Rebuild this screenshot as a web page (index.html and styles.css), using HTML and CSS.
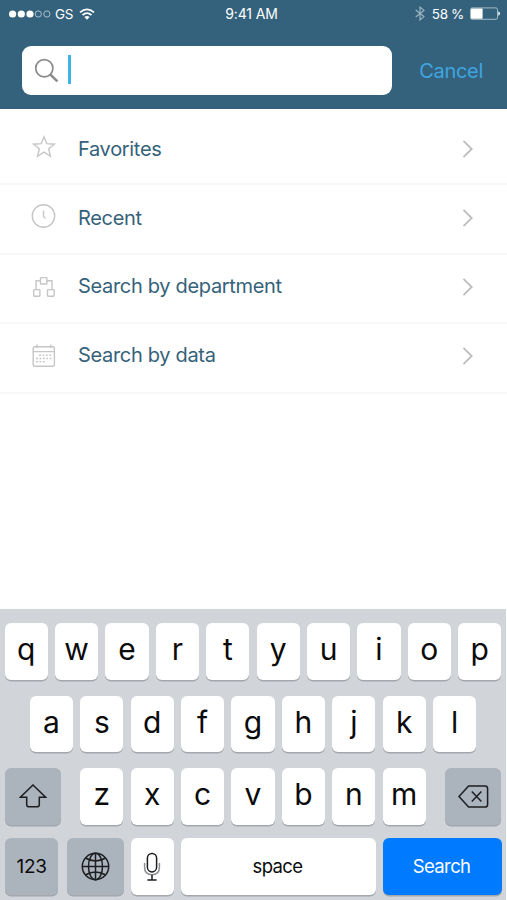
FILE: index.html
```html
<!DOCTYPE html>
<html lang="en">

<head>
  <meta charset="UTF-8">
  <meta name="viewport" content="width=device-width, initial-scale=1.0">
  <title>Search</title>

  <link rel="stylesheet" href="styles.css">
</head>

<body>
  <main class="screen">
    <header class="header">
      <div class="status">
        <div class="status-left">
          <svg class="signal" width="43" height="10" viewBox="0 0 43 10">
            <g fill="#fff">
              <circle cx="4.6" cy="5" r="3.6" />
              <circle cx="13.3" cy="5" r="3.6" />
              <circle cx="22" cy="5" r="3.6" />
            </g>
            <g fill="none" stroke="#a9bfcb" stroke-width="1">
              <circle cx="30.3" cy="5" r="3.1" />
              <circle cx="38.9" cy="5" r="3.1" />
            </g>
          </svg>
          <span class="carrier">GS</span>
          <svg class="wifi" width="16" height="12" viewBox="0 0 16 12">
            <g fill="none" stroke="#fff" stroke-width="1.7">
              <path d="M1 4.4Q8 -1.6 15 4.4" />
              <path d="M3.5 7Q8 3.2 12.5 7" />
            </g>
            <path d="M5.4 8.9Q8 6.9 10.6 8.9L8 11.7Z" fill="#fff" />
          </svg>
        </div>
        <span class="time">9:41 AM</span>
        <div class="status-right">
          <svg class="bluetooth" width="10" height="15" viewBox="0 0 10 15">
            <path d="M0.7 4L9 10.6L5 14V1L9 4.4L0.7 11" fill="none" stroke="#9fb6c3" stroke-width="1.1" />
          </svg>
          <span class="percent">58 %</span>
          <svg class="battery" width="31" height="13" viewBox="0 0 31 13">
            <rect x="0.5" y="0.9" width="27" height="11.4" rx="1.6" fill="none" stroke="#a5bcc9" />
            <rect x="1" y="1.4" width="11.6" height="10.4" rx="0.8" fill="#fff" />
            <path d="M28.3 4.4Q30 5 30 6.6T28.3 8.8Z" fill="#fff" />
          </svg>
        </div>
      </div>
      <div class="search-bar">
        <div class="search-field">
          <svg width="26" height="26" viewBox="0 0 26 26">
            <circle cx="10.3" cy="10.2" r="8.6" fill="none" stroke="#8b8b8b" stroke-width="1.7" />
            <path d="M16.4 16.6L23.4 23.4" stroke="#8b8b8b" stroke-width="2.6" />
          </svg>
          <span class="caret"></span>
        </div>
        <a class="cancel">Cancel</a>
      </div>
    </header>

    <ul class="menu">
      <li class="favorites">
        <svg class="icon" width="26" height="26" viewBox="0 0 26 26">
          <path d="M13 2.8L15.8 9.7L23.3 10.2L17.6 14.9L19.5 22.3L13 18.2L6.5 22.3L8.4 14.9L2.7 10.2L10.2 9.7Z" />
        </svg>
        <span>Favorites</span>
        <svg class="chevron" width="12" height="18" viewBox="0 0 12 18">
          <path d="M1.5 0.9L9.7 9L1.5 17.1" />
        </svg>
      </li>
      <li class="recent">
        <svg class="icon" width="26" height="26" viewBox="0 0 26 26">
          <circle cx="12.5" cy="13" r="11.2" />
          <path d="M12.5 7.4V13.3L14.4 15.6" />
        </svg>
        <span>Recent</span>
        <svg class="chevron" width="12" height="18" viewBox="0 0 12 18">
          <path d="M1.5 0.9L9.7 9L1.5 17.1" />
        </svg>
      </li>
      <li class="department">
        <svg class="icon" width="26" height="26" viewBox="0 0 26 26">
          <rect x="9.5" y="3.6" width="6.4" height="6.4" rx="0.6" />
          <rect x="2.7" y="15.6" width="6.2" height="6.6" rx="0.6" />
          <rect x="16.5" y="15.6" width="6.6" height="6.6" rx="0.6" />
          <path d="M9.5 6.8H5.1V15.6M15.9 6.8H21V15.6" />
        </svg>
        <span>Search by department</span>
        <svg class="chevron" width="12" height="18" viewBox="0 0 12 18">
          <path d="M1.5 0.9L9.7 9L1.5 17.1" />
        </svg>
      </li>
      <li class="data">
        <svg class="icon" width="26" height="26" viewBox="0 0 26 26">
          <rect x="2.2" y="3.8" width="21.2" height="19.4" rx="1.5" />
          <path d="M2.2 8.6H23.4M6 1.6V5M19.9 1.6V5" />
          <path class="days" d="M8.1 12.2H21M5.1 15.5H21M5.1 18.8H15" />
        </svg>
        <span>Search by data</span>
        <svg class="chevron" width="12" height="18" viewBox="0 0 12 18">
          <path d="M1.5 0.9L9.7 9L1.5 17.1" />
        </svg>
      </li>
    </ul>

    <section class="keyboard">
      <div class="keys">
        <button>q</button>
        <button>w</button>
        <button>e</button>
        <button>r</button>
        <button>t</button>
        <button>y</button>
        <button>u</button>
        <button>i</button>
        <button>o</button>
        <button>p</button>
      </div>
      <div class="keys">
        <button>a</button>
        <button>s</button>
        <button>d</button>
        <button>f</button>
        <button>g</button>
        <button>h</button>
        <button>j</button>
        <button>k</button>
        <button>l</button>
      </div>
      <div class="keys">
        <button class="dark shift" aria-label="Shift">
          <svg width="28" height="24" viewBox="0 0 28 24">
            <path d="M14 1L26.6 13.2H20.3V20.4Q20.3 22.8 17.9 22.8H10.1Q7.7 22.8 7.7 20.4V13.2H1.4Z" />
          </svg>
        </button>
        <button>z</button>
        <button>x</button>
        <button>c</button>
        <button>v</button>
        <button>b</button>
        <button>n</button>
        <button>m</button>
        <button class="dark delete" aria-label="Delete">
          <svg width="31" height="23" viewBox="0 0 31 23">
            <path d="M10.6 1H27Q29.6 1 29.6 3.6V19.4Q29.6 22 27 22H10.6L1 11.5Z" />
            <path d="M13.8 6.6L23.4 16.4M23.4 6.6L13.8 16.4" />
          </svg>
        </button>
      </div>
      <div class="keys">
        <button class="dark numbers">123</button>
        <button class="dark globe" aria-label="Next keyboard">
          <svg width="29" height="29" viewBox="0 0 29 29">
            <circle cx="14.5" cy="14.5" r="13.2" />
            <ellipse cx="14.5" cy="14.5" rx="7" ry="13.2" />
            <path d="M14.5 1.3V27.7M1.3 14.5H27.7M4.4 6Q14.5 12 24.6 6M4.4 23Q14.5 17 24.6 23" />
          </svg>
        </button>
        <button class="mic" aria-label="Dictation">
          <svg width="18" height="30" viewBox="0 0 18 30">
            <rect x="4.4" y="1.5" width="9.2" height="18.4" rx="4.6" />
            <path class="cradle" d="M1.6 11V15.6Q1.6 22.8 9 22.8T16.4 15.6V11" />
            <path d="M9 22.8V27.8M4.4 28H13.6" />
          </svg>
        </button>
        <button class="space">space</button>
        <button class="search">Search</button>
      </div>
    </section>
  </main>
</body>

</html>
```
FILE: styles.css
```css
* {
  box-sizing: border-box;
}

body {
  background: #fff;
  font-family: Inter, "Liberation Sans", sans-serif;
  margin: 0;
}

.screen {
  display: flex;
  flex-direction: column;
  height: 900px;
  overflow: hidden;
  width: 507px;
}

.header {
  background: #34627c;
  color: #fff;
  height: 108.5px;
}

.status {
  display: grid;
  font-size: 13.5px;
  grid-template-columns: 1fr auto 1fr;
  height: 27px;
  letter-spacing: -0.35px;
  padding: 0 6px 0 8px;
}

.status > *,
.status-left,
.status-right {
  align-items: center;
  display: flex;
}

.status-right {
  justify-content: flex-end;
}

.time {
  font-size: 14px;
  letter-spacing: -0.1px;
  margin-right: 6px;
}

.carrier {
  margin: 0 6px 0 4px;
}

.percent {
  margin: 0 6px 0 7px;
}

.search-bar {
  align-items: center;
  display: flex;
  padding: 19px 24px 0 21.5px;
}

.search-field {
  align-items: center;
  background: #fff;
  border-radius: 9px;
  display: flex;
  height: 49px;
  padding-left: 12.5px;
  width: 370.5px;
}

.caret {
  background: #3fb2e6;
  height: 29px;
  margin: 0 0 2px 8px;
  width: 3px;
}

.cancel {
  color: #3fa5e0;
  font-size: 20px;
  letter-spacing: -0.3px;
  margin-left: auto;
}

.menu {
  color: #35627a;
  font-size: 20px;
  letter-spacing: -0.32px;
  list-style: none;
  margin: 0;
  padding: 0;
}

.menu li {
  align-items: center;
  border-bottom: 2px solid #f7f7f7;
  display: flex;
  height: 69.5px;
  padding: 0 33px 2px 31px;
}

.menu .favorites {
  height: 76.5px;
  padding-top: 9px;
}

.favorites .icon {
  margin-bottom: 4px;
}

.menu .recent {
  padding-bottom: 2px;
}

.recent .icon {
  margin-bottom: 3px;
}

.department span {
  margin-bottom: 2px;
}

.menu .data {
  padding-bottom: 4px;
}

.data span {
  margin-bottom: 2px;
}

.menu span {
  flex: 1;
  margin-left: 21px;
}

.icon,
.chevron {
  fill: none;
  stroke: #c6c6c6;
  stroke-width: 1.4;
}

.chevron {
  stroke: #bdbdbd;
  stroke-width: 1.8;
}

.days {
  stroke-dasharray: 1.8 1.6;
}

.keyboard {
  background: #d1d5da;
  display: flex;
  flex-direction: column;
  gap: 16px;
  height: 291px;
  margin-top: auto;
  padding-top: 14px;
  width: 506px;
}

.keys {
  display: flex;
  gap: 7.1px;
  height: 56.5px;
  justify-content: center;
}

.keys:last-child {
  margin-top: -2.5px;
  padding-left: 1px;
}

button {
  align-items: center;
  background: #fff;
  border: 0;
  border-radius: 6px;
  box-shadow: 0 1.5px 0 #a4a8ad;
  color: #0b0b0b;
  display: flex;
  font: 30px Inter, "Liberation Sans", sans-serif;
  justify-content: center;
  padding: 0 0 4px;
  width: 43.3px;
}

button svg {
  fill: none;
  stroke: #1c1e21;
  stroke-width: 1.5;
}

.dark {
  background: #abb3bc;
  padding: 0;
  width: 56.5px;
}

.shift {
  margin-right: 12px;
}

.delete {
  margin-left: 12px;
}

.numbers {
  font-size: 19px;
  letter-spacing: -0.3px;
  margin-right: 1.5px;
  width: 53.5px;
}

.mic {
  padding: 2px 0 0;
}

.mic .cradle {
  stroke: #8d8f92;
}

.space,
.search {
  font-size: 18.5px;
  letter-spacing: -0.6px;
  padding: 0 2px 0 0;
  width: 195px;
}

.search {
  background: #007aff;
  color: #fff;
  width: 119px;
}
```
